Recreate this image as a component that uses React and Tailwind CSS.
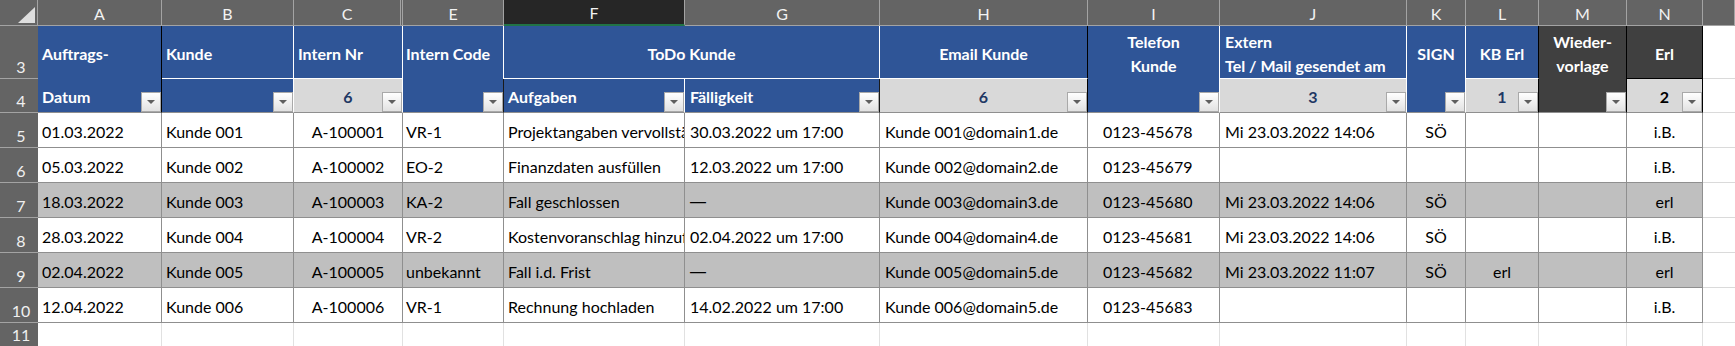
import React from 'react'

const BLUE = 'bg-[#2f5597]'
const DARK = 'bg-[#404040]'
const GREY = 'bg-[#d9d9d9]'

const LETTERS = [
  { l: 'A' },
  { l: 'B' },
  { l: 'C', double: true },
  { l: 'E' },
  { l: 'F', active: true },
  { l: 'G' },
  { l: 'H' },
  { l: 'I' },
  { l: 'J' },
  { l: 'K' },
  { l: 'L' },
  { l: 'M' },
  { l: 'N' },
  { l: '' },
]

// alignment of the data cells per column A..N
const ALIGN = [
  'justify-start pl-[4px]',
  'justify-start pl-[4px]',
  'justify-center',
  'justify-start pl-[3px]',
  'justify-start pl-[4px]',
  'justify-start pl-[5px]',
  'justify-start pl-[5px]',
  'justify-start pl-[15px]',
  'justify-start pl-[5px]',
  'justify-center',
  'justify-center',
  'justify-center',
  'justify-center',
]

const DASH = '—'

const ROWS = [
  { n: 5, cells: ['01.03.2022', 'Kunde 001', 'A-100001', 'VR-1', 'Projektangaben vervollständigen', '30.03.2022 um 17:00', 'Kunde 001@domain1.de', '0123-45678', 'Mi 23.03.2022 14:06', 'SÖ', '', '', 'i.B.'] },
  { n: 6, cells: ['05.03.2022', 'Kunde 002', 'A-100002', 'EO-2', 'Finanzdaten ausfüllen', '12.03.2022 um 17:00', 'Kunde 002@domain2.de', '0123-45679', '', '', '', '', 'i.B.'] },
  { n: 7, shaded: true, cells: ['18.03.2022', 'Kunde 003', 'A-100003', 'KA-2', 'Fall geschlossen', DASH, 'Kunde 003@domain3.de', '0123-45680', 'Mi 23.03.2022 14:06', 'SÖ', '', '', 'erl'] },
  { n: 8, cells: ['28.03.2022', 'Kunde 004', 'A-100004', 'VR-2', 'Kostenvoranschlag hinzufügen', '02.04.2022 um 17:00', 'Kunde 004@domain4.de', '0123-45681', 'Mi 23.03.2022 14:06', 'SÖ', '', '', 'i.B.'] },
  { n: 9, shaded: true, cells: ['02.04.2022', 'Kunde 005', 'A-100005', 'unbekannt', 'Fall i.d. Frist', DASH, 'Kunde 005@domain5.de', '0123-45682', 'Mi 23.03.2022 11:07', 'SÖ', 'erl', '', 'erl'] },
  { n: 10, cells: ['12.04.2022', 'Kunde 006', 'A-100006', 'VR-1', 'Rechnung hochladen', '14.02.2022 um 17:00', 'Kunde 006@domain5.de', '0123-45683', '', '', '', '', 'i.B.'] },
]

function FilterBtn() {
  return (
    <span className="absolute right-0 bottom-0 flex h-[20px] w-[20px] items-center justify-center border border-[#a9a9a9] bg-linear-to-b from-white to-[#e2e2e2]">
      <span className="h-0 w-0 border-x-[4px] border-t-[4px] border-x-transparent border-t-[#5f5f5f]" />
    </span>
  )
}

function RowNum({ n, last }) {
  return (
    <div className={`flex items-end justify-center bg-[#646464] pb-[1px] pl-[4px] text-[16px] leading-[20px] text-[#f0f0f0] ${last ? '' : 'border-b border-[#a3a3a3]'}`}>
      {n}
    </div>
  )
}

function Head({ className = '', filter, children }) {
  return (
    <div className={`relative flex items-center whitespace-nowrap text-[16px] font-bold text-white ${className}`}>
      {children}
      {filter && <FilterBtn />}
    </div>
  )
}

export default function App() {
  return (
    <div className="h-[346px] w-[1735px] overflow-hidden bg-white font-[Lato,sans-serif]">
      <div className="grid grid-cols-[38px_124px_132px_109px_101px_181px_195px_208px_132px_187px_59px_73px_88px_76px_1fr] grid-rows-[26px_53px_34px_35px_35px_35px_35px_35px_35px_23px]">
        {/* column letters */}
        <div className="flex items-end justify-end border-r border-b border-[#a3a3a3] bg-[#646464] pr-[2px] pb-[2px]">
          <svg width="17" height="16" viewBox="0 0 17 16">
            <polygon points="17,0 17,16 0,16" fill="#dedede" />
          </svg>
        </div>
        {LETTERS.map((c, i) => (
          <div
            key={i}
            className={`flex items-center justify-center pt-[2px] text-[16px] text-[#f2f2f2] ${
              c.active ? 'border-b-2 border-b-[#217346] bg-[#262626]' : 'border-b border-b-[#a3a3a3] bg-[#646464]'
            } ${c.double ? 'border-r-[3px] border-double border-r-[#a3a3a3]' : 'border-r border-r-[#a3a3a3]'}`}
          >
            {c.l}
          </div>
        ))}

        {/* row 3 */}
        <RowNum n={3} />
        <Head className={`${BLUE} border-r border-black pl-[4px] pt-[3px]`}>Auftrags-</Head>
        <Head className={`${BLUE} border-r border-b border-white pl-[4px] pt-[3px]`}>Kunde</Head>
        <Head className={`${BLUE} border-r border-b border-white pl-[4px] pt-[3px]`}>Intern Nr</Head>
        <Head className={`${BLUE} border-r border-white pl-[3px] pt-[3px]`}>Intern Code</Head>
        <Head className={`${BLUE} col-span-2 justify-center border-r border-b border-white pt-[3px]`}>ToDo Kunde</Head>
        <Head className={`${BLUE} justify-center border-r border-b border-r-black border-b-white pt-[3px]`}>Email Kunde</Head>
        <Head className={`${BLUE} flex-col justify-start border-r border-white pt-[4px] leading-[24px]`}>
          <span>Telefon</span>
          <span>Kunde</span>
        </Head>
        <Head className={`${BLUE} flex-col !items-start justify-start border-r border-b border-white pt-[4px] pl-[5px] leading-[24px]`}>
          <span>Extern</span>
          <span>Tel / Mail gesendet am</span>
        </Head>
        <Head className={`${BLUE} justify-center border-r border-white pt-[3px]`}>SIGN</Head>
        <Head className={`${BLUE} justify-center border-r border-b border-r-black border-b-white pt-[3px]`}>KB Erl</Head>
        <Head className={`${DARK} flex-col justify-start border-r border-black pt-[4px] leading-[24px]`}>
          <span>Wieder-</span>
          <span>vorlage</span>
        </Head>
        <Head className={`${DARK} justify-center border-r border-b border-black pt-[3px]`}>Erl</Head>
        <div className="border-b border-[#dadada]" />

        {/* row 4 */}
        <RowNum n={4} />
        <Head filter className={`${BLUE} border-r border-b border-r-black border-b-[#8f8f8f] pl-[4px] pt-[2px]`}>Datum</Head>
        <Head filter className={`${BLUE} border-r border-b border-r-white border-b-[#8f8f8f]`} />
        <Head filter className={`${GREY} justify-center border-r border-b border-r-white border-b-[#8f8f8f] pt-[2px] !text-[#1f3864]`}>6</Head>
        <Head filter className={`${BLUE} border-r border-b border-r-[#1a1a1a] border-b-[#8f8f8f]`} />
        <Head filter className={`${BLUE} border-r border-b border-r-white border-b-[#8f8f8f] pl-[4px] pt-[2px]`}>Aufgaben</Head>
        <Head filter className={`${BLUE} border-r border-b border-r-[#1a1a1a] border-b-[#8f8f8f] pl-[5px] pt-[2px]`}>Fälligkeit</Head>
        <Head filter className={`${GREY} justify-center border-r border-b border-r-black border-b-[#8f8f8f] pt-[2px] !text-[#1f3864]`}>6</Head>
        <Head filter className={`${BLUE} border-r border-b border-r-white border-b-[#8f8f8f]`} />
        <Head filter className={`${GREY} justify-center border-r border-b border-r-white border-b-[#8f8f8f] pt-[2px] !text-[#1f3864]`}>3</Head>
        <Head filter className={`${BLUE} border-r border-b border-r-white border-b-[#8f8f8f]`} />
        <Head filter className={`${GREY} justify-center border-r border-b border-r-black border-b-[#8f8f8f] pt-[2px] !text-[#1f3864]`}>1</Head>
        <Head filter className={`${DARK} border-r border-b border-r-black border-b-[#8f8f8f]`} />
        <Head filter className={`${GREY} justify-center border-r border-b border-r-black border-b-[#8f8f8f] pt-[2px] !text-black`}>2</Head>
        <div className="border-b border-[#dadada]" />

        {/* data rows */}
        {ROWS.map((row) => (
          <React.Fragment key={row.n}>
            <RowNum n={row.n} />
            {row.cells.map((v, i) => (
              <div
                key={i}
                className={`flex items-center overflow-hidden whitespace-nowrap border-r border-b border-[#8f8f8f] pt-[3px] text-[16px] text-black ${ALIGN[i]} ${
                  row.shaded ? 'bg-[#bfbfbf]' : 'bg-white'
                }`}
              >
                {v === DASH ? <span className="font-['Liberation_Sans']">{v}</span> : v}
              </div>
            ))}
            <div className="border-b border-[#dadada]" />
          </React.Fragment>
        ))}

        {/* row 11 */}
        <RowNum n={11} last />
        {ALIGN.map((_, i) => (
          <div key={i} className="border-r border-[#e1e1e1]" />
        ))}
        <div />
      </div>
    </div>
  )
}
